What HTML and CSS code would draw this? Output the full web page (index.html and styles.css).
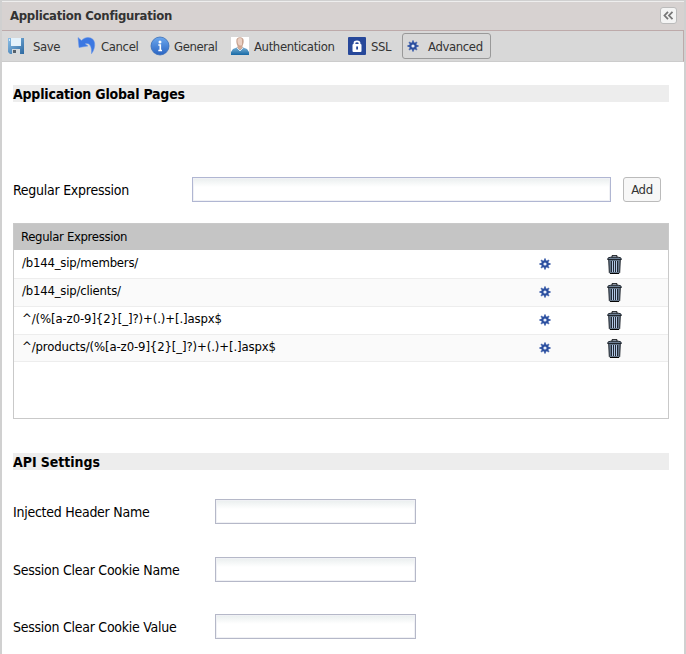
FILE: index.html
```html
<!DOCTYPE html>
<html lang="en">
<head>
<meta charset="utf-8">
<title>Application Configuration</title>
<link rel="stylesheet" href="styles.css">
</head>
<body>
<svg class="defs" aria-hidden="true">
  <defs>
    <linearGradient id="disk" x1="0" y1="0" x2="1" y2="1"><stop offset="0" stop-color="#8cc0e8"/><stop offset="1" stop-color="#2c68a0"/></linearGradient>
    <linearGradient id="blue" x1="0" y1="0" x2="0" y2="1"><stop offset="0" stop-color="#6ca8ee"/><stop offset="1" stop-color="#2a64c2"/></linearGradient>
    <linearGradient id="shirt" x1="0" y1="0" x2="0" y2="1"><stop offset="0" stop-color="#7fb4d8"/><stop offset="1" stop-color="#1769a5"/></linearGradient>
    <symbol id="gear" viewBox="0 0 12 12">
      <path d="M6 .5v11M.5 6h11M2.100 2.100l7.800 7.800M9.900 2.100l-7.800 7.800" stroke="#4a69b0" stroke-width="1.900"/>
      <circle cx="6" cy="6" r="2.700" fill="#e8eefa" stroke="#2b4f9f" stroke-width="2.200"/>
    </symbol>
    <symbol id="trash" viewBox="0 0 15 19">
      <path d="M5 2.500V.7h5v1.800" fill="#c8d6e8" stroke="#080a0d"/>
      <path d="M1.700 4.500h11.600l-.6 13-.9 1H3.200l-.9-1z" fill="#66778a" stroke="#20262e"/>
      <path d="M4 6h7v11H4z" fill="#b3c8e6"/>
      <path d="M4.500 6v11M6.500 6v11M8.500 6v11M10.500 6v11" stroke="#11161f" stroke-width=".9"/>
      <path d="M.6 4.500q0-2.200 2.500-2.200h8.800q2.500 0 2.500 2.200z" fill="#6e8095" stroke="#20262e"/>
      <path d="M3 18.500h9" stroke="#050505"/>
    </symbol>
  </defs>
</svg>
<div class="panel">
  <header class="title-bar">
    <h1>Application Configuration</h1>
    <button class="collapse" aria-label="Collapse"><svg width="11" height="9" viewBox="0 0 11 9"><path d="M5 .8L1.500 4.500 5 8.200M9.500.8L6 4.500l3.500 3.700" fill="none" stroke="#777" stroke-width="1.800"/></svg></button>
  </header>
  <nav class="toolbar">
    <a class="tool save"><svg width="18" height="18" viewBox="0 0 18 18"><path d="M1 1h16v16H3l-2-2z" fill="url(#disk)"/><path d="M4 1h10v8H4z" fill="#e4f2fb"/><path d="M5 12h8v5H5z" fill="#d5dadd"/><path d="M6 13h3v3H6z" fill="#56616b"/><path d="M2 2h1v2H2z" fill="#d3eaff"/></svg><span>Save</span></a>
    <a class="tool cancel"><svg width="20" height="20" viewBox="0 0 20 20"><path d="M1 1.500L2 11.500l9-1.500-3-2.200c4-1.500 7 1.500 6.500 10C19.500 11 19 1.500 11 1.500 8.500 1.500 6.500 2.500 4.500 4.500z" fill="#3c78e2" stroke="#6595ea" stroke-width=".5"/></svg><span>Cancel</span></a>
    <a class="tool general"><svg width="20" height="20" viewBox="0 0 20 20"><circle cx="10" cy="10" r="9" fill="url(#blue)" stroke="#3a6fb9" stroke-width=".8"/><circle cx="10" cy="6" r="1.500" fill="#fff"/><path d="M8.300 9h2v5.500M8.300 14.500h3.700" fill="none" stroke="#fff" stroke-width="1.600"/></svg><span>General</span></a>
    <a class="tool auth"><svg width="18" height="18" viewBox="0 0 18 18"><path d="M0 0h18v18H0z" fill="#fff"/><path d="M0 18v-3l2-3 5-2h4l5 2 2 3v3z" fill="url(#shirt)"/><path d="M6.500 9h5v2L9 13l-2.500-2z" fill="#d9ad97"/><path d="M5.300 4q0-3.700 3.700-3.700T12.700 4q0 5.500-3.700 6.500-3.700-1-3.700-6.500z" fill="#c9a593"/><path d="M6.500 4q0-3 2.500-3t2 3v4q-4 2-4.500-4z" fill="#ead0c3"/><path d="M6 11l3 3 3-3" fill="none" stroke="#d7e9f3"/></svg><span>Authentication</span></a>
    <a class="tool ssl"><svg width="18" height="18" viewBox="0 0 18 18"><rect width="18" height="18" rx="1" fill="#27489a"/><path d="M6.500 8V6q0-1.700 2.500-1.700T11.500 6v2" fill="none" stroke="#fff" stroke-width="1.800"/><rect x="4.500" y="7" width="9" height="8" rx="1" fill="#fff"/><path d="M8.200 9.500h1.800v3H8.200z" fill="#27489a"/></svg><span>SSL</span></a>
    <a class="tool advanced"><svg width="12" height="12"><use href="#gear"/></svg><span>Advanced</span></a>
  </nav>
  <main>
    <h2 class="global">Application Global Pages</h2>
    <div class="expression-form"><label for="regex">Regular Expression</label><input id="regex" type="text"><button class="add">Add</button></div>
    <section class="grid">
      <div class="grid-head">Regular Expression</div>
      <div class="row first"><span>/b144_sip/members/</span><svg class="gear"><use href="#gear"/></svg><svg class="trash"><use href="#trash"/></svg></div>
      <div class="row alt"><span>/b144_sip/clients/</span><svg class="gear"><use href="#gear"/></svg><svg class="trash"><use href="#trash"/></svg></div>
      <div class="row"><span class="pattern">^/(%[a-z0-9]{2}[_]?)+(.)+[.]aspx$</span><svg class="gear"><use href="#gear"/></svg><svg class="trash"><use href="#trash"/></svg></div>
      <div class="row alt last"><span class="pattern">^/products/(%[a-z0-9]{2}[_]?)+(.)+[.]aspx$</span><svg class="gear"><use href="#gear"/></svg><svg class="trash"><use href="#trash"/></svg></div>
    </section>
    <h2 class="api">API Settings</h2>
    <div class="settings">
      <div class="field"><label for="header">Injected Header Name</label><input id="header" type="text"></div>
      <div class="field"><label for="cookie">Session Clear Cookie Name</label><input id="cookie" type="text"></div>
      <div class="field"><label for="value">Session Clear Cookie Value</label><input id="value" type="text"></div>
    </div>
  </main>
</div>
</body>
</html>
```
FILE: styles.css
```css
* { box-sizing: border-box; }
body {
  margin: 0;
  height: 654px;
  overflow: hidden;
  background: #fff;
  color: #000;
  font: 13px/16px "DejaVu Sans Condensed", "DejaVu Sans", sans-serif;
  font-stretch: condensed;
}
.defs { position: absolute; width: 0; height: 0; }
.panel { height: 654px; border: solid #d0d0d0; border-width: 1px 2px 0; }
.title-bar {
  display: flex;
  justify-content: space-between;
  height: 29px;
  padding: 6px 7px 0 8px;
  border-top: 1px solid #eee;
  background: #d7d2d1;
}
h1, h2 { margin: 0; font-weight: bold; }
h1 { font-size: 13px; line-height: 16px; color: #333; letter-spacing: -.28px; }
.collapse {
  display: flex;
  align-items: center;
  justify-content: center;
  width: 17px;
  height: 17px;
  margin-top: -1px;
  padding: 0;
  border: 1px solid #bbb;
  border-radius: 3px;
  background: #f4f4f4;
}
.toolbar {
  display: flex;
  height: 32px;
  padding: 2px 0 0 5px;
  border: solid #bdaaaa;
  border-width: 1px 1px 0 0;
  border-bottom: 1px solid #ccc;
  background: #d8d8d8;
  color: #333;
  letter-spacing: -.38px;
}
.tool { display: flex; flex: none; align-items: center; height: 26px; white-space: nowrap; }
.tool svg { flex: none; }
.tool span { margin-top: 1px; }
.save { width: 70px; gap: 8px; }
.cancel { width: 73px; gap: 4px; }
.general { width: 81px; gap: 4px; }
.auth { width: 117px; gap: 5px; }
.ssl { width: 54px; gap: 5px; }
.advanced { width: 89px; gap: 9px; padding-left: 4px; border: 1px solid #999; border-radius: 3px; }
main { padding: 23px 15px 0 11px; }
h2 { height: 17px; background: #ededed; font-size: 14px; line-height: 18px; letter-spacing: -.2px; }
label { font-size: 14px; letter-spacing: -.26px; }
.expression-form { display: flex; align-items: center; height: 25px; margin-top: 75px; }
.expression-form label { width: 179px; }
input {
  height: 25px;
  padding: 0 4px;
  border: 1px solid #b5b8c8;
  background: linear-gradient(#e9eeee, #fff 9px);
  box-shadow: inset 0 0 0 1px #f0f1f5;
  outline: 0;
}
.expression-form input { width: 419px; border-color: #b0b6d2; }
.add {
  width: 38px;
  height: 25px;
  margin-left: 12px;
  padding: 1px 0 0;
  border: 1px solid #bbb;
  border-radius: 3px;
  background: #f7f7f7;
  color: #333;
  font: inherit;
  letter-spacing: -.3px;
}
.grid { height: 196px; margin-top: 21px; border: 1px solid #c9c9c9; }
.grid-head { height: 26px; padding: 5px 7px; background: #c5c5c5; letter-spacing: -.33px; }
.row {
  display: grid;
  grid-template-columns: 516px 69px 15px;
  align-items: start;
  height: 28px;
  padding: 4px 0 0 8px;
  border-bottom: 1px solid #ededed;
  letter-spacing: -.2px;
}
.row.first { height: 29px; padding-top: 5px; }
.row > .pattern { letter-spacing: -.11px; }
.row.alt { background: #fafafa; }
.row.last { height: 27px; }
.gear { width: 12px; height: 12px; margin: 3px 0 0 1px; }
.trash { width: 15px; height: 19px; }
.api { margin-top: 34px; letter-spacing: -.05px; }
.settings { margin-top: 29px; }
.field { display: flex; align-items: center; height: 25px; margin-bottom: 33px; }
.field:nth-child(2) { margin-bottom: 32px; }
.field label { width: 202px; }
.field input { width: 201px; }
```
